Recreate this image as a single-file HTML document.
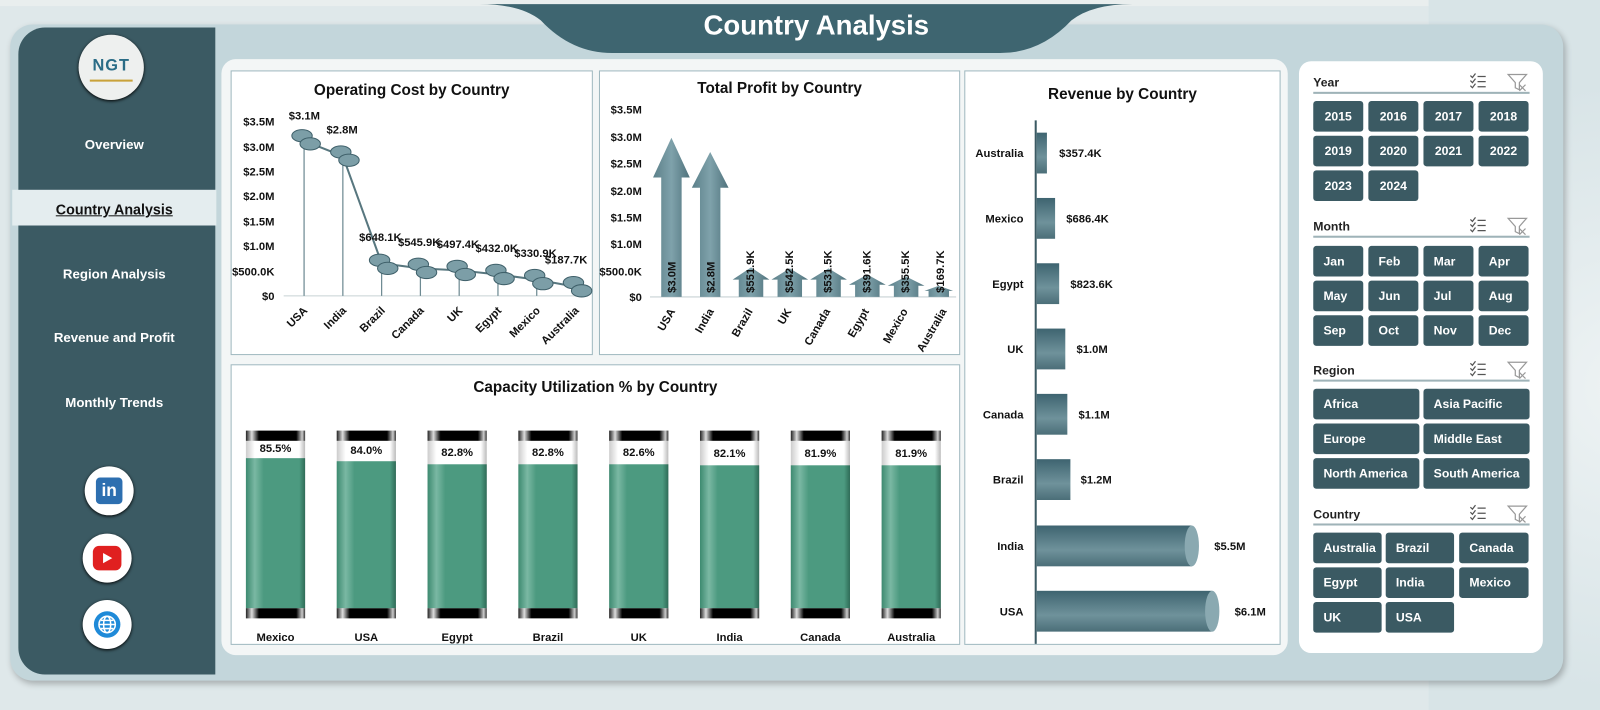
<!DOCTYPE html>
<html><head><meta charset="utf-8"><style>
*{margin:0;padding:0;box-sizing:border-box}
body{width:1600px;height:696px;background:#dfe8ea;font-family:"Liberation Sans",sans-serif;position:relative;overflow:hidden}
#w{position:absolute;left:0;top:0;width:1568px;height:682px;transform:scale(1.0204);transform-origin:0 0}
.a{position:absolute}
.nav{position:absolute;left:12px;width:200px;text-align:center;color:#fff;font-weight:bold;font-size:13px}
.box{position:absolute;background:#fff;border:1px solid #9fb8bf}
.t{position:absolute;width:100%;text-align:center;font-weight:bold;font-size:15px;color:#111}
.btn{position:absolute;background:#3b5a63;color:#fff;font-weight:bold;font-size:12px;border-radius:3px;display:flex;align-items:center;padding-left:10px}
.btn.c{justify-content:center;padding-left:0}
.sh{position:absolute;left:1287px;width:212px;font-size:12px;font-weight:bold;color:#222;border-bottom:2px solid #9fb3b8;height:18px}
svg text{font-family:"Liberation Sans",sans-serif}
</style></head><body>
<div id="w">
<div class="a" style="left:0;top:0;width:1600px;height:6px;background:#e9eeee"></div>
<div class="a" style="left:1400px;top:0;width:200px;height:696px;background:radial-gradient(circle at 200px 380px,#eef3f4 0,#d8e4e7 300px)"></div>
<div class="a" style="left:10px;top:24px;width:1522px;height:643px;background:#c3d6db;border-radius:22px;box-shadow:2px 3px 6px rgba(0,0,0,.25)"></div>
<svg class="a" style="left:450px;top:0" width="680" height="56"><path d="M20 4 Q60 4 80 20 Q110 52 150 52 L530 52 Q570 52 600 20 Q620 4 660 4 Z" fill="#3e6570"/></svg>
<div class="a" style="left:480px;top:10px;width:640px;text-align:center;color:#fff;font-weight:bold;font-size:27px">Country Analysis</div>
<div class="a" style="left:18px;top:27px;width:193px;height:634px;background:#3b5a63;border-radius:26px 0 0 26px"></div>
<div class="a" style="left:77px;top:34px;width:64px;height:64px;border-radius:50%;background:#eef0ef;box-shadow:0 1px 3px #000"></div>
<div class="a" style="left:84px;top:56px;width:50px;text-align:center;font-weight:bold;font-size:16px;color:#2a6c86;letter-spacing:1px">NGT</div>
<div class="a" style="left:88px;top:78px;width:42px;height:2px;background:#c9a23a"></div>
<div class="nav" style="top:134px">Overview</div>
<div class="a" style="left:12px;top:186px;width:200px;height:35px;background:#e4edef"></div>
<div class="nav" style="top:197px;color:#111;text-decoration:underline;font-size:14px">Country Analysis</div>
<div class="nav" style="top:261px">Region Analysis</div>
<div class="nav" style="top:323px">Revenue and Profit</div>
<div class="nav" style="top:387px">Monthly Trends</div>
<div class="a" style="left:83px;top:457px;width:48px;height:48px;border-radius:50%;background:#fff;box-shadow:0 1px 3px #000"></div>
<div class="a" style="left:94px;top:468px;width:26px;height:26px;border-radius:4px;background:#2d6fb0;color:#fff;font-weight:bold;font-size:17px;text-align:center;line-height:26px">in</div>
<div class="a" style="left:81px;top:523px;width:48px;height:48px;border-radius:50%;background:#fff;box-shadow:0 1px 3px #000"></div>
<div class="a" style="left:91px;top:535px;width:28px;height:24px;border-radius:6px;background:#e02020"></div>
<svg class="a" style="left:100px;top:541px" width="12" height="12"><path d="M1 1 L10 6 L1 11Z" fill="#fff"/></svg>
<div class="a" style="left:81px;top:588px;width:48px;height:48px;border-radius:50%;background:#fff;box-shadow:0 1px 3px #000"></div>
<svg class="a" style="left:91px;top:598px" width="28" height="28"><circle cx="14" cy="14" r="13" fill="#1f8ad8"/><g fill="none" stroke="#fff" stroke-width="1.5"><circle cx="14" cy="14" r="8"/><ellipse cx="14" cy="14" rx="3.5" ry="8"/><path d="M6 14H22M8 10H20M8 18H20"/></g></svg>

<div class="a" style="left:217px;top:58px;width:1045px;height:584px;background:#f3f6f6;border-radius:14px"></div>

<div class="box" style="left:226px;top:69px;width:355px;height:279px"><div class="t" style="top:10px">Operating Cost by Country</div></div>
<svg class="a" style="left:226px;top:69px" width="355" height="279">
<g font-size="11" font-weight="bold" text-anchor="end" fill="#111">
<text x="43" y="54">$3.5M</text><text x="43" y="79">$3.0M</text><text x="43" y="103">$2.5M</text><text x="43" y="127">$2.0M</text><text x="43" y="152">$1.5M</text><text x="43" y="176">$1.0M</text><text x="43" y="201">$500.0K</text><text x="43" y="225">$0</text></g>
<line x1="52" y1="221" x2="350" y2="221" stroke="#c8d2d4"/>
<g stroke="#6d8a92" stroke-width="1.2">
<line x1="72" y1="66" x2="72" y2="221"/><line x1="110" y1="81" x2="110" y2="221"/><line x1="148" y1="189" x2="148" y2="221"/><line x1="186" y1="194" x2="186" y2="221"/><line x1="224" y1="196" x2="224" y2="221"/><line x1="262" y1="200" x2="262" y2="221"/><line x1="300" y1="205" x2="300" y2="221"/><line x1="338" y1="212" x2="338" y2="221"/></g>
<polyline points="72,69 110,84 148,189 186,194 224,196 262,200 300,205 338,212" fill="none" stroke="#58777f" stroke-width="2"/>
<g fill="#7c9ea7" stroke="#3f606a" stroke-width="1">
<ellipse cx="70" cy="64" rx="10" ry="6"/><ellipse cx="78" cy="72" rx="10" ry="6"/>
<ellipse cx="108" cy="80" rx="10" ry="6"/><ellipse cx="116" cy="88" rx="10" ry="6"/>
<ellipse cx="146" cy="186" rx="10" ry="6"/><ellipse cx="154" cy="194" rx="10" ry="6"/>
<ellipse cx="184" cy="190" rx="10" ry="6"/><ellipse cx="192" cy="198" rx="10" ry="6"/>
<ellipse cx="222" cy="192" rx="10" ry="6"/><ellipse cx="230" cy="200" rx="10" ry="6"/>
<ellipse cx="260" cy="196" rx="10" ry="6"/><ellipse cx="268" cy="204" rx="10" ry="6"/>
<ellipse cx="298" cy="201" rx="10" ry="6"/><ellipse cx="306" cy="209" rx="10" ry="6"/>
<ellipse cx="336" cy="208" rx="10" ry="6"/><ellipse cx="344" cy="216" rx="10" ry="6"/></g>
<g font-size="11" font-weight="bold" fill="#111">
<text x="57" y="48">$3.1M</text><text x="94" y="62">$2.8M</text><text x="126" y="167">$648.1K</text><text x="164" y="172">$545.9K</text><text x="202" y="174">$497.4K</text><text x="240" y="178">$432.0K</text><text x="278" y="183">$330.9K</text><text x="308" y="189">$187.7K</text></g>
<g font-size="11" font-weight="bold" fill="#111" text-anchor="end">
<text transform="translate(76,236) rotate(-45)">USA</text><text transform="translate(114,236) rotate(-45)">India</text><text transform="translate(152,236) rotate(-45)">Brazil</text><text transform="translate(190,236) rotate(-45)">Canada</text><text transform="translate(228,236) rotate(-45)">UK</text><text transform="translate(266,236) rotate(-45)">Egypt</text><text transform="translate(304,236) rotate(-45)">Mexico</text><text transform="translate(342,236) rotate(-45)">Australia</text></g>
</svg>

<div class="box" style="left:587px;top:69px;width:354px;height:279px"><div class="t" style="top:8px">Total Profit by Country</div></div>
<svg class="a" style="left:587px;top:69px" width="354" height="279">
<g font-size="11" font-weight="bold" text-anchor="end" fill="#111">
<text x="42" y="42">$3.5M</text><text x="42" y="69">$3.0M</text><text x="42" y="95">$2.5M</text><text x="42" y="122">$2.0M</text><text x="42" y="148">$1.5M</text><text x="42" y="174">$1.0M</text><text x="42" y="201">$500.0K</text><text x="42" y="226">$0</text></g>
<line x1="50" y1="222" x2="350" y2="222" stroke="#c8d2d4"/>
<defs><linearGradient id="ag" x1="0" x2="1"><stop offset="0" stop-color="#5b7f89"/><stop offset=".5" stop-color="#7fa2ab"/><stop offset="1" stop-color="#4f727c"/></linearGradient></defs>
<g fill="url(#ag)">
<path d="M61 222V105H53L71 66L89 105H81V222Z"/>
<path d="M99 222V115H91L109 80L127 115H119V222Z"/>
<path d="M137 222V205H131L149 193L167 205H161V222Z"/>
<path d="M175 222V205H169L187 194L205 205H199V222Z"/>
<path d="M213 222V205H207L225 194L243 205H237V222Z"/>
<path d="M251 222V210H245L263 200L281 210H275V222Z"/>
<path d="M289 222V211H283L301 202L319 211H313V222Z"/>
<path d="M323 222V216H319L333 211L347 216H343V222Z"/></g>
<g font-size="11" font-weight="bold" fill="#111">
<text transform="translate(75,218) rotate(-90)">$3.0M</text><text transform="translate(113,218) rotate(-90)">$2.8M</text><text transform="translate(152,218) rotate(-90)">$551.9K</text><text transform="translate(190,218) rotate(-90)">$542.5K</text><text transform="translate(228,218) rotate(-90)">$531.5K</text><text transform="translate(266,218) rotate(-90)">$391.6K</text><text transform="translate(304,218) rotate(-90)">$355.5K</text><text transform="translate(338,218) rotate(-90)">$169.7K</text></g>
<g font-size="11" font-weight="bold" fill="#111" text-anchor="end">
<text transform="translate(75,236) rotate(-60)">USA</text><text transform="translate(113,236) rotate(-60)">India</text><text transform="translate(151,236) rotate(-60)">Brazil</text><text transform="translate(189,236) rotate(-60)">UK</text><text transform="translate(227,236) rotate(-60)">Canada</text><text transform="translate(265,236) rotate(-60)">Egypt</text><text transform="translate(303,236) rotate(-60)">Mexico</text><text transform="translate(341,236) rotate(-60)">Australia</text></g>
</svg>

<div class="box" style="left:226px;top:357px;width:715px;height:275px"><div class="t" style="top:13px">Capacity Utilization % by Country</div></div>
<svg class="a" style="left:226px;top:357px" width="715" height="275">
<defs>
<linearGradient id="cg" x1="0" x2="1"><stop offset="0" stop-color="#3d8a70"/><stop offset=".15" stop-color="#7ab8a3"/><stop offset=".3" stop-color="#4c9a80"/><stop offset=".9" stop-color="#4c9a80"/><stop offset="1" stop-color="#2f6b57"/></linearGradient>
<linearGradient id="bg" x1="0" x2="1"><stop offset="0" stop-color="#222"/><stop offset=".1" stop-color="#ddd"/><stop offset=".22" stop-color="#000"/><stop offset=".85" stop-color="#000"/><stop offset=".95" stop-color="#ccc"/><stop offset="1" stop-color="#333"/></linearGradient>
<linearGradient id="wg" x1="0" x2="1"><stop offset="0" stop-color="#ccc"/><stop offset=".15" stop-color="#fff"/><stop offset=".9" stop-color="#fff"/><stop offset="1" stop-color="#bbb"/></linearGradient>
<g id="cy"><rect x="0" y="65" width="58" height="184" fill="url(#wg)"/><rect x="0" y="65" width="58" height="10" fill="url(#bg)"/><rect x="0" y="239" width="58" height="10" fill="url(#bg)"/></g></defs>
<g font-size="11" font-weight="bold" fill="#111" text-anchor="middle">
<g transform="translate(15,0)"><use href="#cy"/><rect y="92" width="58" height="147" fill="url(#cg)"/><text x="29" y="86">85.5%</text><text x="29" y="271">Mexico</text></g>
<g transform="translate(104,0)"><use href="#cy"/><rect y="95" width="58" height="144" fill="url(#cg)"/><text x="29" y="88">84.0%</text><text x="29" y="271">USA</text></g>
<g transform="translate(193,0)"><use href="#cy"/><rect y="98" width="58" height="141" fill="url(#cg)"/><text x="29" y="90">82.8%</text><text x="29" y="271">Egypt</text></g>
<g transform="translate(282,0)"><use href="#cy"/><rect y="98" width="58" height="141" fill="url(#cg)"/><text x="29" y="90">82.8%</text><text x="29" y="271">Brazil</text></g>
<g transform="translate(371,0)"><use href="#cy"/><rect y="98" width="58" height="141" fill="url(#cg)"/><text x="29" y="90">82.6%</text><text x="29" y="271">UK</text></g>
<g transform="translate(460,0)"><use href="#cy"/><rect y="99" width="58" height="140" fill="url(#cg)"/><text x="29" y="91">82.1%</text><text x="29" y="271">India</text></g>
<g transform="translate(549,0)"><use href="#cy"/><rect y="99" width="58" height="140" fill="url(#cg)"/><text x="29" y="91">81.9%</text><text x="29" y="271">Canada</text></g>
<g transform="translate(638,0)"><use href="#cy"/><rect y="99" width="58" height="140" fill="url(#cg)"/><text x="29" y="91">81.9%</text><text x="29" y="271">Australia</text></g>
</g></svg>

<div class="box" style="left:945px;top:69px;width:310px;height:563px"><div class="t" style="top:14px">Revenue by Country</div></div>
<svg class="a" style="left:945px;top:69px" width="310" height="563">
<defs><linearGradient id="rg" x1="0" y1="0" x2="0" y2="1"><stop offset="0" stop-color="#3e6470"/><stop offset=".6" stop-color="#6f929b"/><stop offset="1" stop-color="#4b6e78"/></linearGradient></defs>
<line x1="70" y1="49" x2="70" y2="562" stroke="#3b5a63" stroke-width="2"/>
<g fill="url(#rg)">
<rect x="71" y="61" width="10" height="40"/><rect x="71" y="125" width="18" height="40"/><rect x="71" y="189" width="22" height="40"/><rect x="71" y="253" width="28" height="40"/><rect x="71" y="317" width="30" height="40"/><rect x="71" y="381" width="33" height="40"/><rect x="71" y="446" width="152" height="40"/><rect x="71" y="510" width="172" height="40"/></g>
<g fill="#8aa9b1"><ellipse cx="223" cy="466" rx="7" ry="20"/><ellipse cx="243" cy="530" rx="7" ry="20"/></g>
<g font-size="11" font-weight="bold" fill="#111" text-anchor="end">
<text x="58" y="85">Australia</text><text x="58" y="149">Mexico</text><text x="58" y="213">Egypt</text><text x="58" y="277">UK</text><text x="58" y="341">Canada</text><text x="58" y="405">Brazil</text><text x="58" y="470">India</text><text x="58" y="534">USA</text></g>
<g font-size="11" font-weight="bold" fill="#111">
<text x="93" y="85">$357.4K</text><text x="100" y="149">$686.4K</text><text x="104" y="213">$823.6K</text><text x="110" y="277">$1.0M</text><text x="112" y="341">$1.1M</text><text x="114" y="405">$1.2M</text><text x="245" y="470">$5.5M</text><text x="265" y="534">$6.1M</text></g>
</svg>

<div class="a" style="left:1273px;top:60px;width:239px;height:580px;background:#fff;border-radius:12px"></div>
<div class="sh" style="top:74px">Year</div>
<div class="sh" style="top:215px">Month</div>
<div class="sh" style="top:356px">Region</div>
<div class="sh" style="top:497px">Country</div>
<svg class="a" style="left:1438px;top:70px" width="62" height="500">
<g id="ic" stroke="#555" fill="none" stroke-width="1.2"><path d="M3 4l2 2 3-4M3 9l2 2 3-4M3 14l2 2 3-4M10 5h8M10 10h8M10 15h8"/><path d="M40 3h18l-7 8v7l-4-2v-5z" stroke="#999"/><path d="M51 13l6 6M57 13l-6 6" stroke="#999"/></g>
<use href="#ic" y="141"/><use href="#ic" y="282"/><use href="#ic" y="423"/></svg>
<div class="btn c" style="left:1287px;top:99px;width:49px;height:30px">2015</div>
<div class="btn c" style="left:1341px;top:99px;width:49px;height:30px">2016</div>
<div class="btn c" style="left:1395px;top:99px;width:49px;height:30px">2017</div>
<div class="btn c" style="left:1449px;top:99px;width:49px;height:30px">2018</div>
<div class="btn c" style="left:1287px;top:133px;width:49px;height:30px">2019</div>
<div class="btn c" style="left:1341px;top:133px;width:49px;height:30px">2020</div>
<div class="btn c" style="left:1395px;top:133px;width:49px;height:30px">2021</div>
<div class="btn c" style="left:1449px;top:133px;width:49px;height:30px">2022</div>
<div class="btn c" style="left:1287px;top:167px;width:49px;height:30px">2023</div>
<div class="btn c" style="left:1341px;top:167px;width:49px;height:30px">2024</div>
<div class="btn" style="left:1287px;top:241px;width:49px;height:30px">Jan</div>
<div class="btn" style="left:1341px;top:241px;width:49px;height:30px">Feb</div>
<div class="btn" style="left:1395px;top:241px;width:49px;height:30px">Mar</div>
<div class="btn" style="left:1449px;top:241px;width:49px;height:30px">Apr</div>
<div class="btn" style="left:1287px;top:275px;width:49px;height:30px">May</div>
<div class="btn" style="left:1341px;top:275px;width:49px;height:30px">Jun</div>
<div class="btn" style="left:1395px;top:275px;width:49px;height:30px">Jul</div>
<div class="btn" style="left:1449px;top:275px;width:49px;height:30px">Aug</div>
<div class="btn" style="left:1287px;top:309px;width:49px;height:30px">Sep</div>
<div class="btn" style="left:1341px;top:309px;width:49px;height:30px">Oct</div>
<div class="btn" style="left:1395px;top:309px;width:49px;height:30px">Nov</div>
<div class="btn" style="left:1449px;top:309px;width:49px;height:30px">Dec</div>
<div class="btn" style="left:1287px;top:381px;width:104px;height:30px">Africa</div>
<div class="btn" style="left:1395px;top:381px;width:104px;height:30px">Asia Pacific</div>
<div class="btn" style="left:1287px;top:415px;width:104px;height:30px">Europe</div>
<div class="btn" style="left:1395px;top:415px;width:104px;height:30px">Middle East</div>
<div class="btn" style="left:1287px;top:449px;width:104px;height:30px">North America</div>
<div class="btn" style="left:1395px;top:449px;width:104px;height:30px">South America</div>
<div class="btn" style="left:1287px;top:522px;width:67px;height:30px">Australia</div>
<div class="btn" style="left:1358px;top:522px;width:67px;height:30px">Brazil</div>
<div class="btn" style="left:1430px;top:522px;width:68px;height:30px">Canada</div>
<div class="btn" style="left:1287px;top:556px;width:67px;height:30px">Egypt</div>
<div class="btn" style="left:1358px;top:556px;width:67px;height:30px">India</div>
<div class="btn" style="left:1430px;top:556px;width:68px;height:30px">Mexico</div>
<div class="btn" style="left:1287px;top:590px;width:67px;height:30px">UK</div>
<div class="btn" style="left:1358px;top:590px;width:67px;height:30px">USA</div>
</div>
</body></html>
